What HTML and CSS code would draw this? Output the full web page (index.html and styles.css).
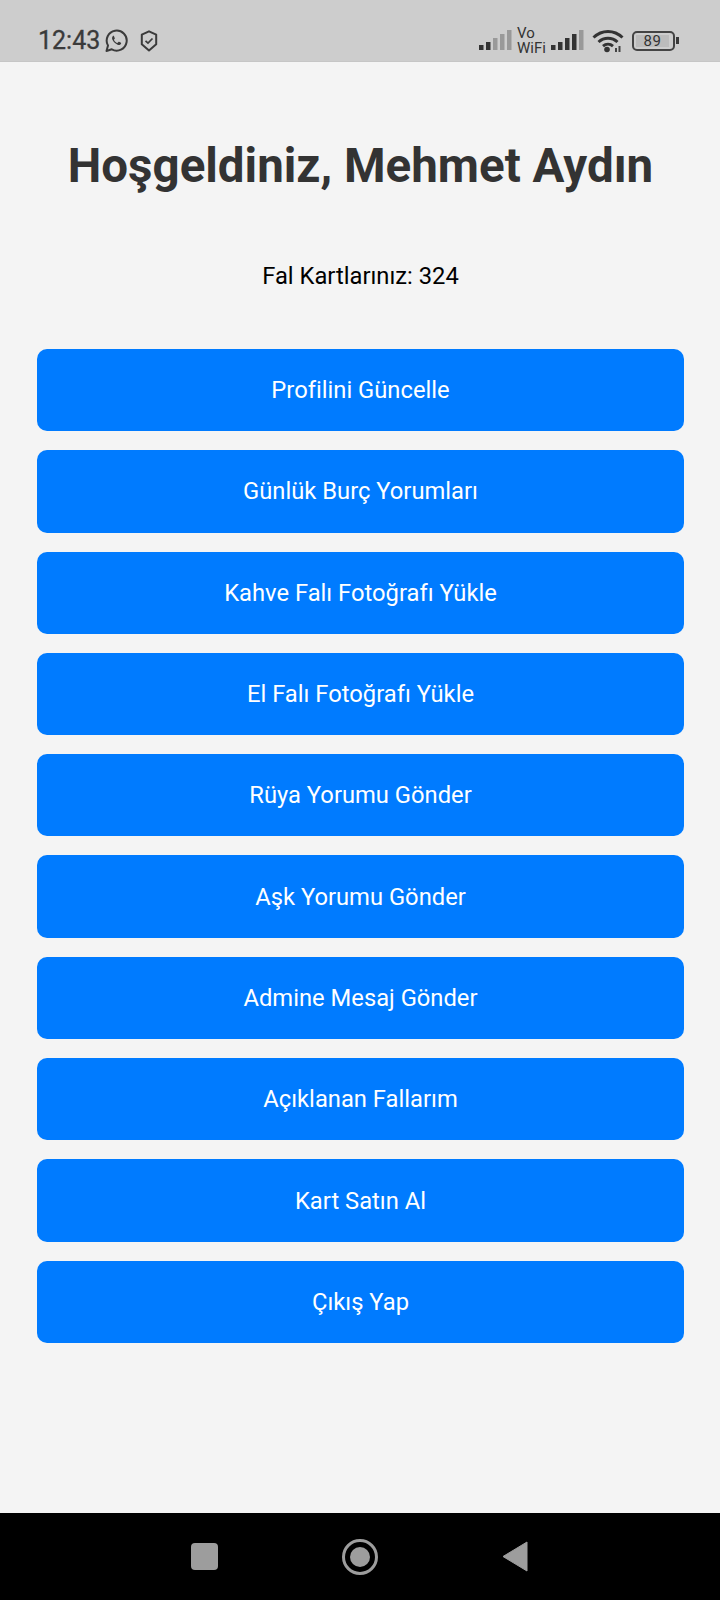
FILE: index.html
```html
<!DOCTYPE html>
<html lang="tr">
<head>
<meta charset="utf-8">
<title>Hoşgeldiniz</title>
<link rel="stylesheet" href="styles.css">
</head>
<body>
<div class="screen">
  <header class="status">
    <div class="status-left">
      <span class="time">12:43</span>
      <svg class="ic-wa" viewBox="0 0 24 24"><path d="M2.500 22l1.500-5.500A10 10 0 1 1 7.800 20.300L2.500 22z" fill="none" stroke="#3b3b3b" stroke-width="2" stroke-linejoin="round"/><path d="M8.800 7.200c-.9.8-1 2.300-.2 3.900 1 2.100 2.800 3.800 5 4.600 1.500.5 2.800.1 3.400-1 .2-.4.200-.8 0-1l-1.900-1c-.3-.1-.5 0-.7.200l-.8.900c-.2.200-.4.200-.7.100-1.300-.6-2.200-1.500-2.900-2.800-.1-.2-.1-.4.100-.6l.6-.7c.2-.2.200-.4.100-.6l-.8-2c-.2-.4-.8-.4-1.200-.2z" fill="#3b3b3b"/></svg>
      <svg class="ic-shield" viewBox="0 0 18 22"><path d="M9 1.300l7.200 3.400v9.500L9 20.500 1.800 14.200V4.700z" fill="none" stroke="#3b3b3b" stroke-width="2" stroke-linejoin="round"/><path d="M5.500 10.800l2.500 2.300 4.500-4.600" fill="none" stroke="#3b3b3b" stroke-width="1.700"/></svg>
    </div>
    <div class="status-right">
      <svg class="ic-sig" viewBox="0 0 33 21"><rect x="0" y="15" width="4.500" height="5" fill="#333"/><rect x="7" y="12" width="4.500" height="8" fill="#333"/><rect x="14" y="8" width="4.500" height="12" fill="#999"/><rect x="21" y="4" width="4.500" height="16" fill="#999"/><rect x="28" y="0" width="4.500" height="20" fill="#999"/></svg>
      <span class="vowifi">Vo<br>WiFi</span>
      <svg class="ic-sig" viewBox="0 0 33 21"><rect x="0" y="15" width="4.500" height="5" fill="#333"/><rect x="7" y="12" width="4.500" height="8" fill="#333"/><rect x="14" y="8" width="4.500" height="12" fill="#333"/><rect x="21" y="4" width="4.500" height="16" fill="#333"/><rect x="28" y="0" width="4.500" height="20" fill="#999"/></svg>
      <svg class="ic-wifi" viewBox="0 0 32 24"><path d="M1.500 8.500C10 .5 22 .5 30.500 8.500M6.500 13c5.500-5 13.500-5 19 0M11 17.200c3-2.600 7-2.600 10 0" fill="none" stroke="#333" stroke-width="3"/><circle cx="15" cy="20.500" r="2.800" fill="#333"/><path d="M23 19h2v4h-2zM26.500 17h2v6h-2z" fill="#444"/></svg>
      <div class="battery"><div class="batt-body"><span class="batt-fill">89</span></div><span class="batt-tip"></span></div>
    </div>
  </header>

  <main class="content">
    <h1 class="title">Hoşgeldiniz, Mehmet Aydın</h1>
    <p class="cards">Fal Kartlarınız: 324</p>
    <nav class="menu">
      <button class="btn">Profilini Güncelle</button>
      <button class="btn">Günlük Burç Yorumları</button>
      <button class="btn">Kahve Falı Fotoğrafı Yükle</button>
      <button class="btn">El Falı Fotoğrafı Yükle</button>
      <button class="btn">Rüya Yorumu Gönder</button>
      <button class="btn">Aşk Yorumu Gönder</button>
      <button class="btn">Admine Mesaj Gönder</button>
      <button class="btn">Açıklanan Fallarım</button>
      <button class="btn">Kart Satın Al</button>
      <button class="btn">Çıkış Yap</button>
    </nav>
  </main>

  <footer class="navbar">
    <span class="nav-square"></span>
    <span class="nav-home"><span class="nav-dot"></span></span>
    <svg class="nav-back" viewBox="0 0 26 32"><path d="M25 1v29L1 15.500z" fill="#9d9d9d" stroke="#9d9d9d" stroke-width="1" stroke-linejoin="round"/></svg>
  </footer>
</div>
</body>
</html>
```
FILE: styles.css
```css
* { box-sizing: border-box; }
html, body { margin: 0; padding: 0; }
body { width: 720px; height: 1600px; overflow: hidden; font-family: Roboto, sans-serif; }
.screen { display: flex; flex-direction: column; width: 720px; height: 1600px; background: #f4f4f4; }

.status { flex: 0 0 62px; display: flex; justify-content: space-between; align-items: center; background: #cdcdcd; border-bottom: 1px solid #c6c6c6; padding: 20px 41px 0 38px; }
.status-left, .status-right { display: flex; align-items: center; }
.time { font-size: 25px; color: #3a3a3a; line-height: 28px; -webkit-text-stroke: .3px #3a3a3a; }
.ic-wa { width: 24px; height: 24px; margin-left: 4px; }
.ic-shield { width: 18px; height: 22px; margin-left: 12px; }
.ic-sig { width: 33px; height: 21px; flex: none; }
.vowifi { font-size: 15px; line-height: 15px; color: #333; margin: 0 5px; width: 29px; white-space: nowrap; flex: none; }
.ic-wifi { width: 32px; height: 24px; margin-left: 8px; flex: none; }
.battery { display: flex; align-items: center; margin-left: 8px; }
.batt-body { width: 43px; height: 20px; border: 2px solid #444; border-radius: 5px; padding: 2px; display: flex; }
.batt-fill { flex: 0 0 33px; background: #bcbcbc; font-size: 15px; line-height: 12px; letter-spacing: .5px; color: #333; text-align: center; }
.batt-tip { width: 3px; height: 7px; background: #3a3a3a; margin-left: 1px; }

.content { flex: 1; display: flex; flex-direction: column; padding: 0 36px 0 37px; }
.title { margin: 76px 0 0; font-size: 47.500px; line-height: 56px; font-weight: 700; color: #333; text-align: center; white-space: nowrap; }
.cards { margin: 68px 0 0; font-size: 23.750px; line-height: 28px; color: #000; text-align: center; }
.menu { display: flex; flex-direction: column; gap: 19px; margin-top: 59px; }
.btn { height: 82.300px; border: 0; border-radius: 10px; background: #007bff; color: #fff; font-family: Roboto, sans-serif; font-size: 23.750px; padding: 0; }

.navbar { flex: 0 0 87px; background: #000; display: flex; align-items: center; padding-left: 191px; }
.nav-square { width: 27px; height: 27px; border-radius: 4px; background: #9d9d9d; }
.nav-home { width: 36px; height: 36px; margin-left: 124px; border: 3px solid #9d9d9d; border-radius: 50%; display: flex; align-items: center; justify-content: center; }
.nav-dot { width: 20px; height: 20px; border-radius: 50%; background: #9d9d9d; }
.nav-back { width: 26px; height: 32px; margin-left: 124px; }
```
